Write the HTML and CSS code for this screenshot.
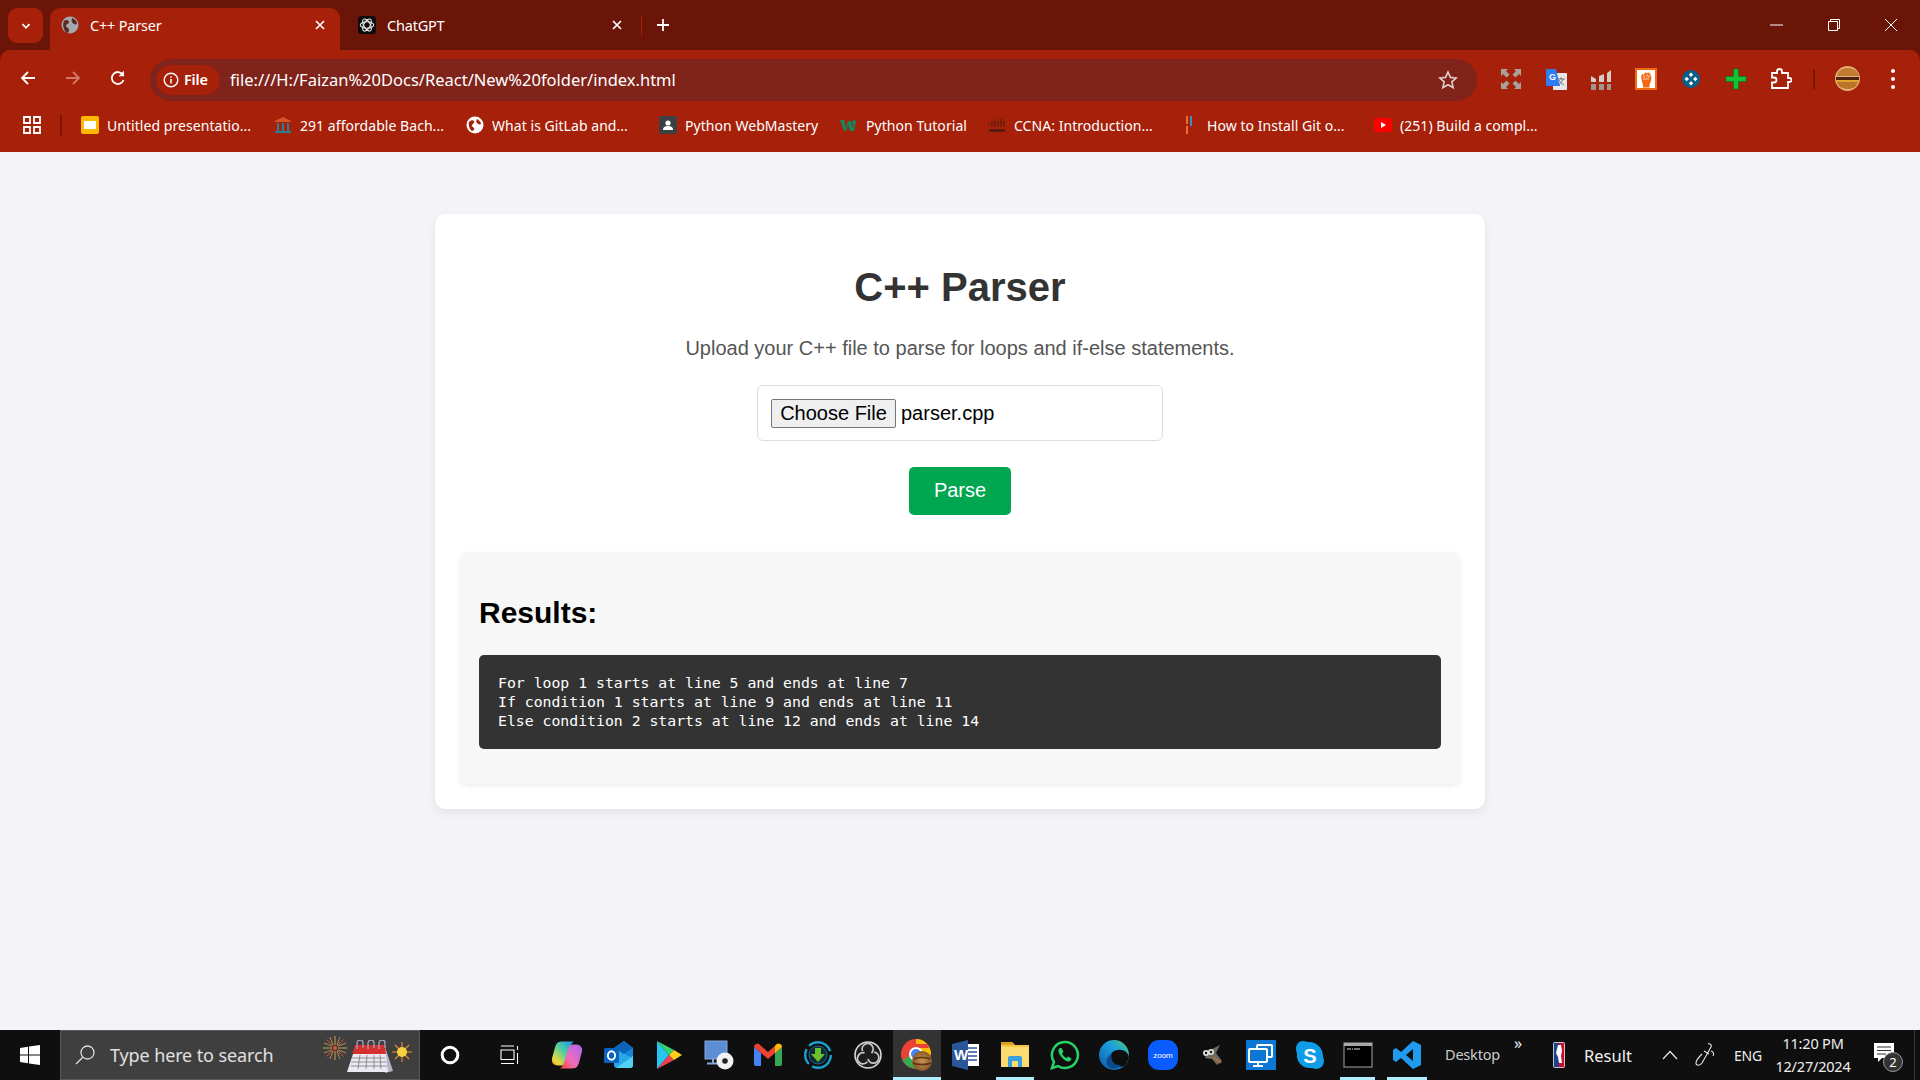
FILE: index.html
```html
<!DOCTYPE html>
<html lang="en">
<head>
<meta charset="utf-8">
<title>C++ Parser</title>
<link rel="stylesheet" href="styles.css">
</head>
<body>
<header class="browser">
  <div class="tabstrip">
    <div class="tab-menu"><svg class="i12" viewBox="0 0 12 12"><path d="M2.5 4.2 6 7.8l3.5-3.6" fill="none" stroke="#fff" stroke-width="1.8"/></svg></div>
    <div class="tab tab-active">
      <svg class="i18" viewBox="0 0 18 18"><circle cx="9" cy="9" r="8.5" fill="#a4a9ad"/><path d="M3 5c2-2 5-1 5 1s-3 2-3 4 3 1 3 4c0 1-1 3-2 3C3 15 1 9 3 5zM11 2c3 1 5 3 5 6-2 1-4 0-5-2-1-1 0-3 0-4z" fill="#5c2a22"/></svg>
      <span class="tab-title">C++ Parser</span>
      <svg class="i12 tab-close" viewBox="0 0 12 12"><path d="M2 2l8 8M10 2l-8 8" stroke="#fff" stroke-width="1.7"/></svg>
    </div>
    <div class="tab tab-other">
      <svg class="i18 gpt" viewBox="0 0 20 20"><rect width="20" height="20" rx="4" fill="#0c0c0c"/><g fill="none" stroke="#e8e8e8" stroke-width="1.2"><ellipse cx="10" cy="10" rx="7.5" ry="3.6"/><ellipse cx="10" cy="10" rx="7.5" ry="3.6" transform="rotate(60 10 10)"/><ellipse cx="10" cy="10" rx="7.5" ry="3.6" transform="rotate(120 10 10)"/></g></svg>
      <span class="tab-title">ChatGPT</span>
      <svg class="i12 tab-close" viewBox="0 0 12 12"><path d="M2 2l8 8M10 2l-8 8" stroke="#fff" stroke-width="1.7"/></svg>
    </div>
    <div class="tab-sep"></div>
    <div class="tab-new"><svg class="i14" viewBox="0 0 14 14"><path d="M7 1v12M1 7h12" stroke="#fff" stroke-width="1.8"/></svg></div>
    <div class="window-controls">
      <svg class="i14" viewBox="0 0 14 14"><path d="M0 7h13" stroke="#fff" stroke-width="1"/></svg>
      <svg class="i14" viewBox="0 0 14 14"><path d="M1.500 3.500h9v9h-9zM3.500 3.500v-2h9v9h-2" fill="none" stroke="#fff" stroke-width="1"/></svg>
      <svg class="i14" viewBox="0 0 14 14"><path d="M1 1l12 12M13 1L1 13" stroke="#fff" stroke-width="1"/></svg>
    </div>
  </div>
  <div class="toolbar">
    <div class="nav-btn"><svg class="i18" viewBox="0 0 18 18"><path d="M16 9H3M9 3 3 9l6 6" fill="none" stroke="#fff" stroke-width="1.8"/></svg></div>
    <div class="nav-btn"><svg class="i18" viewBox="0 0 18 18"><path d="M2 9h13M9 3l6 6-6 6" fill="none" stroke="#d27a68" stroke-width="1.8"/></svg></div>
    <div class="nav-btn"><svg class="i18" viewBox="0 0 18 18"><path d="M14.500 11a6 6 0 1 1-.6-5.200" fill="none" stroke="#fff" stroke-width="1.8"/><path d="M15 1.800v5.400H9.600z" fill="#fff"/></svg></div>
    <div class="omnibox">
      <div class="chip">
        <svg class="i16" viewBox="0 0 16 16"><circle cx="8" cy="8" r="6.800" fill="none" stroke="#fff" stroke-width="1.400"/><path d="M8 7v4.500M8 4.200v1.600" stroke="#fff" stroke-width="1.500"/></svg>
        <span class="chip-text">File</span>
      </div>
      <span class="url">file:///H:/Faizan%20Docs/React/New%20folder/index.html</span>
      <svg class="i18 star" viewBox="0 0 20 20"><path d="M10 2l2.400 5.400 5.800.6-4.400 3.900 1.300 5.800L10 14.700l-5.100 3 1.300-5.800L1.800 8l5.800-.6z" fill="none" stroke="#e3cfca" stroke-width="1.600"/></svg>
    </div>
    <div class="ext-row">
      <div class="ext"><svg class="i22" viewBox="0 0 22 22"><path d="M1 1h7L6 3l3.500 3.500-3 3L3 6 1 8zM21 1v7l-2-2-3.500 3.500-3-3L16 3l-2-2zM1 21v-7l2 2 3.500-3.500 3 3L6 19l2 2zM21 21h-7l2-2-3.500-3.500 3-3L19 16l2-2z" fill="#a8a09a"/></svg></div>
      <div class="ext"><svg class="i22" viewBox="0 0 22 22"><rect x="8" y="5" width="14" height="17" rx="1" fill="#e8e8e8"/><path d="M12 11h8M16 9v2M18 11c-1 3-3 5-5 6M14 12c1 2 3 4 5 5" stroke="#777" stroke-width="1" fill="none"/><path d="M1 1h10l4 17H2a1 1 0 0 1-1-1z" fill="#2f7cf2"/><text x="4" y="12" class="ext-g">G</text></svg></div>
      <div class="ext"><svg class="i22" viewBox="0 0 22 22"><path d="M1 8l5 3v3H1zM9 8l5-2v8H9zM17 5l4-3v12h-4z" fill="#d5cdc8"/><path d="M1 16h5v6H1zM9 16h5v6H9zM17 16h4v6h-4z" fill="#a0948e"/></svg></div>
      <div class="ext"><svg class="i22" viewBox="0 0 22 22"><rect x="1" y="1" width="20" height="20" fill="#fff" stroke="#f26a10" stroke-width="2"/><path d="M6 9l1-3 2 .5L10 4.500l2 .5 2-.5 1.500 2 1 3-1 5-1 2v3H8v-3l-1-3z" fill="#f26a10"/><path d="M9 7v3M12 6v3M14 7v3M8 11h6" stroke="#fff" stroke-width=".7"/></svg></div>
      <div class="ext"><svg class="i18" viewBox="0 0 18 18"><circle cx="9" cy="9" r="9" fill="#0a5f8a"/><path d="M9 2.500l2.200 2.200L9 7 6.800 4.700zM9 11l2.200 2.300L9 15.500l-2.200-2.200zM2.500 9l2.200-2.200L7 9l-2.300 2.200zM11 9l2.300-2.200L15.500 9l-2.200 2.200z" fill="#fff"/></svg></div>
      <div class="ext"><svg class="i22" viewBox="0 0 22 22"><path d="M8.500 1h5v7.500H21v5h-7.500V21h-5v-7.500H1v-5h7.500z" fill="#12c435" stroke="#0a7a20" stroke-width=".8"/></svg></div>
      <div class="ext"><svg class="i22" viewBox="0 0 22 22"><path d="M2 5h5V3.500a2.500 2.500 0 0 1 5 0V5h6v5h1.500a2 2 0 0 1 0 4H18v6H2v-5.500h2a2.500 2.500 0 0 0 0-5H2z" fill="none" stroke="#fff" stroke-width="1.800"/></svg></div>
      <div class="ext-sep"></div>
      <svg class="avatar" viewBox="0 0 25 25"><circle cx="12.500" cy="12.500" r="12.500" fill="#e2b27a"/><path d="M2 10C3 4 8 2 13 2s10 3 11 8z" fill="#c27a2c"/><path d="M1 11h23v3H1z" fill="#4e2410"/><path d="M1 14h23v2H1z" fill="#e3a52e"/><path d="M2 16h21c-1 5-5 7-10 7S3 21 2 16z" fill="#bd7428"/></svg>
      <div class="kebab"><i></i><i></i><i></i></div>
    </div>
  </div>
  <div class="bookmarks">
    <div class="bm-apps"><svg class="i18" viewBox="0 0 18 18"><path d="M1 1h6v6H1zM11 1h6v6h-6zM1 11h6v6H1zM11 11h6v6h-6z" fill="none" stroke="#fff" stroke-width="1.800"/></svg></div>
    <div class="bm-sep"></div>
    <div class="bm-list">
      <div class="bm"><svg class="i18" viewBox="0 0 18 18"><rect width="18" height="18" rx="2" fill="#fbb904"/><rect x="3" y="5" width="12" height="8" fill="#fff"/></svg><span>Untitled presentatio...</span></div>
      <div class="bm"><svg class="i18" viewBox="0 0 18 18"><path d="M1 5l8-4 8 4v1H1z" fill="#d8532a"/><path d="M3 7h2v8H3zM8 7h2v8H8zM13 7h2v8h-2z" fill="#2c7d95"/><path d="M1 15h16v2H1z" fill="#2c7d95"/></svg><span>291 affordable Bach...</span></div>
      <div class="bm"><svg class="i18" viewBox="0 0 18 18"><circle cx="9" cy="9" r="8.500" fill="#fff"/><path d="M3 6c2-2 4-2 5-1s-1 3-2 4 1 2 2 3-1 3-2 3C4 14 2 9 3 6zM11 3c2 1 4 3 4 5-2 1-3 0-4-1s-1-3 0-4z" fill="#a6200a"/></svg><span>What is GitLab and...</span></div>
      <div class="bm"><svg class="i18" viewBox="0 0 18 18"><rect width="18" height="18" rx="2" fill="#3c4043"/><circle cx="9" cy="7" r="2.600" fill="#fff"/><path d="M4 14c0-3 2-4 5-4s5 1 5 4z" fill="#fff"/></svg><span>Python WebMastery</span></div>
      <div class="bm"><svg class="i18" viewBox="0 0 18 18"><path d="M0 4h4l2 8 2-7h3l2 7 1-4h-2l1-4h2l1 2-2 9h-4l-2-6-2 6H4z" fill="#0f8a5f"/></svg><span>Python Tutorial</span></div>
      <div class="bm"><svg class="i18" viewBox="0 0 18 18"><path d="M1 7v2M4 5v6M7 3v8M10 5v6M13 3v8M16 5v6" stroke="#4a1a10" stroke-width="1.100"/><path d="M1 13h16v3H1z" fill="#4a1a10" opacity=".8"/></svg><span>CCNA: Introduction...</span></div>
      <div class="bm"><svg class="i18" viewBox="0 0 18 18"><path d="M6 0v8M6 10v8" stroke="#ee7b30" stroke-width="1.800"/><path d="M10 0v10" stroke="#29a0d8" stroke-width="1.800"/></svg><span>How to Install Git o...</span></div>
      <div class="bm"><svg class="i18" viewBox="0 0 18 18"><rect y="2" width="18" height="14" rx="3.500" fill="#f00"/><path d="M7 6l5 3-5 3z" fill="#fff"/></svg><span>(251) Build a compl...</span></div>
    </div>
  </div>
</header>

<main class="page">
  <section class="card">
    <h1 class="title">C++ Parser</h1>
    <p class="lead">Upload your C++ file to parse for loops and if-else statements.</p>
    <div class="file-box">
      <span class="file-btn">Choose File</span>
      <span class="file-name">parser.cpp</span>
    </div>
    <div class="parse-btn">Parse</div>
    <section class="results">
      <h2 class="results-title">Results:</h2>
      <pre class="output">For loop 1 starts at line 5 and ends at line 7
If condition 1 starts at line 9 and ends at line 11
Else condition 2 starts at line 12 and ends at line 14</pre>
    </section>
  </section>
</main>

<footer class="taskbar">
  <div class="start"><svg class="i20" viewBox="0 0 20 20"><path d="M0 3l8-1.200V9.500H0zM9 1.600 20 0v9.500H9zM0 10.500h8v7.700L0 17zM9 10.500h11V20L9 18.400z" fill="#fff"/></svg></div>
  <div class="search">
    <svg class="i22" viewBox="0 0 22 22"><circle cx="13.500" cy="8.500" r="6.500" fill="none" stroke="#ddd" stroke-width="1.300"/><path d="M8.800 13.200 2 20" stroke="#ddd" stroke-width="1.300"/></svg>
    <span class="search-text">Type here to search</span>
    <div class="search-art">
      <svg class="fw1" viewBox="0 0 24 24"><g stroke-width="1"><path d="M12 0v9M12 15v9M0 12h9M15 12h9" stroke="#c9a24a"/><path d="M3.500 3.500 9.500 9.500M14.500 14.500l6 6M20.500 3.500l-6 6M9.500 14.500l-6 6" stroke="#e0552a"/><path d="M7 1l3 8M14 15l3 8M17 1l-3 8M10 15l-3 8M1 7l8 3M15 14l8 3M23 7l-8 3M9 14l-8 3" stroke="#b08a5a"/></g><circle cx="12" cy="12" r="2" fill="#e0552a"/></svg>
      <svg class="cal" viewBox="0 0 47 33"><path d="M38 7l8 24-8 2z" fill="#b9b5c8"/><path d="M8 8h30l3 24H0z" fill="#ece9f2"/><path d="M8 5h30l1 9H5.500z" fill="#d62f2f"/><path d="M10 9V3a3 3 0 0 1 6 0v5M21 9V3a3 3 0 0 1 6 0v5M32 9V3a3 3 0 0 1 6 0v5" fill="none" stroke="#a8a4b8" stroke-width="1.300"/><path d="M5 18h33M4.300 22h35M3.700 26h36.500M13 15l-2 14M20 15l-1 14M27 15v14M33 15l1 14" stroke="#777" stroke-width=".8"/></svg>
      <svg class="fw2" viewBox="0 0 20 20"><path d="M10 0v20M0 10h20M3 3l14 14M17 3 3 17" stroke="#e8902a" stroke-width="1.100"/><circle cx="10" cy="10" r="5" fill="#f7d040"/></svg>
    </div>
  </div>
  <div class="tasks">
    <div class="task"><svg class="i20" viewBox="0 0 20 20"><circle cx="10" cy="10" r="7.800" fill="none" stroke="#fff" stroke-width="3"/></svg></div>
    <div class="task"><svg class="i22" viewBox="0 0 22 22"><path d="M2 2h13M2 19.500h13M2 6h13v9.500H2zM18.500 2v4M18.500 9v11" fill="none" stroke="#fff" stroke-width="1.100"/></svg></div>
    <div class="task"><svg class="i30" viewBox="0 0 30 27"><defs><linearGradient id="cp1" x1="1" y1="0" x2="0" y2="1"><stop offset="0" stop-color="#1e8ff0"/><stop offset=".45" stop-color="#4fd0a0"/><stop offset=".8" stop-color="#e8d83a"/><stop offset="1" stop-color="#f0a030"/></linearGradient><linearGradient id="cp2" x1="1" y1="0" x2="0" y2="1"><stop offset="0" stop-color="#a868f0"/><stop offset=".6" stop-color="#f06cb8"/><stop offset="1" stop-color="#f04a30"/></linearGradient></defs><path d="M10 0C5 0 4 3 3 6L0 17c-1 4 2 7 6 7h3c3 0 4-2 5-5l4-13c1-3 2-5 4-6z" fill="url(#cp1)"/><path d="M20 27c5 0 6-3 7-6l3-11c1-4-2-7-6-7h-3c-3 0-4 2-5 5l-4 13c-1 3-2 5-4 6z" fill="url(#cp2)"/></svg></div>
    <div class="task"><svg class="i30" viewBox="0 0 30 30"><path d="M10 8l10-7 9 7v17a3 3 0 0 1-3 3H13a3 3 0 0 1-3-3z" fill="#28a8e8"/><path d="M10 8l10-7 9 7-9 6z" fill="#0b64b8"/><path d="M20 14l9-6v10z" fill="#1488d8"/><path d="M12 28l17-12v9a3 3 0 0 1-3 3z" fill="#4fd0f4"/><rect x="0" y="8" width="15" height="15" rx="1.500" fill="#0a62c0"/><ellipse cx="7.500" cy="15.500" rx="3.600" ry="4.200" fill="none" stroke="#fff" stroke-width="2"/></svg></div>
    <div class="task"><svg class="play" viewBox="0 0 26 30"><path d="M1 1l12 14L1 29z" fill="#26c6f0"/><path d="M1 1l17 9-5 5z" fill="#35d66c"/><path d="M1 29l17-9-5-5z" fill="#f0424e"/><path d="M18 10l8 5-8 5-5-5z" fill="#fcce1e"/></svg></div>
    <div class="task"><svg class="i30" viewBox="0 0 30 30"><rect x="1" y="1" width="22" height="18" fill="#5b8ed6" stroke="#8aa9d8"/><path d="M9 19v4M3 23.500h12" stroke="#8aa9d8" stroke-width="2"/><circle cx="21" cy="21" r="8.500" fill="#f2f2f2"/><circle cx="21" cy="21" r="2.800" fill="#222"/></svg></div>
    <div class="task"><svg class="i30" viewBox="0 0 30 30"><path d="M1 7l7 6v13H3a2 2 0 0 1-2-2z" fill="#4285f4"/><path d="M29 7l-7 6v13h5a2 2 0 0 0 2-2z" fill="#34a853"/><path d="M1 7c0-3 3-4 5-3l9 8 9-8c2-1 5 0 5 3l-7 6-7 6-7-6z" fill="#ea4335"/><path d="M24 4c2-1 5 0 5 3l-7 6V6z" fill="#fbbc04"/></svg></div>
    <div class="task"><svg class="i30" viewBox="0 0 30 30"><circle cx="15" cy="15" r="12.800" fill="none" stroke="#1b9ed0" stroke-width="2.400" stroke-dasharray="26 4 16 4"/><circle cx="15" cy="15" r="9" fill="#0d2a36" stroke="#15708f"/><path d="M12 8h6v6h4l-7 8-7-8h4z" fill="#6bc22e"/></svg></div>
    <div class="task"><svg class="i30" viewBox="0 0 30 30"><circle cx="15" cy="15" r="13" fill="#1d1d1d" stroke="#d8d8d8" stroke-width="1.600"/><g fill="none" stroke="#c8c8c8" stroke-width="1.800"><path d="M9.500 11a5.500 5.500 0 1 1 9 2"/><path d="M9.500 11a5.500 5.500 0 1 1 9 2" transform="rotate(120 15 15)"/><path d="M9.500 11a5.500 5.500 0 1 1 9 2" transform="rotate(240 15 15)"/></g></svg></div>
    <div class="task task-hi"><svg class="i32" viewBox="0 0 32 32"><defs><radialGradient id="bn"><stop offset="0" stop-color="#c99255"/><stop offset="1" stop-color="#8a5a2a"/></radialGradient></defs><circle cx="15" cy="15" r="15" fill="#ea4335"/><path d="M1.500 21a15 15 0 0 0 18 8l-5-15z" fill="#34a853"/><path d="M15 0a15 15 0 0 1 15 15l-7 8-8-8V0z" fill="#fbbc04"/><path d="M15 9h13a15 15 0 0 0-2-4H15z" fill="#ea4335"/><circle cx="15" cy="15" r="6" fill="#4285f4" stroke="#fff" stroke-width="2"/><circle cx="21" cy="22" r="10" fill="url(#bn)"/><path d="M13 20c4-2 12-2 16 0M12 24c4 2 14 2 18 0" fill="none" stroke="#5b3414" stroke-width="1.600"/></svg></div>
    <div class="task"><svg class="word" viewBox="0 0 27 30"><rect x="11" y="4" width="16" height="22" fill="#fff"/><path d="M16 8h9M16 12h9M16 16h9M16 20h9" stroke="#2b579a" stroke-width="1.600"/><path d="M0 4 16 0v30L0 26z" fill="#2b579a"/><text x="2" y="20" class="word-w">W</text></svg></div>
    <div class="task task-on"><svg class="i30" viewBox="0 0 30 30"><path d="M1 2h11l3 3h14v22H1z" fill="#f5c84c"/><path d="M1 2h11l3 3H1z" fill="#e0a020"/><path d="M1 7h28v20H1z" fill="#fbdc70"/><path d="M8 27v-9a2 2 0 0 1 2-2h10a2 2 0 0 1 2 2v9h-4v-6h-6v6z" fill="#3a9fe0"/></svg></div>
    <div class="task"><svg class="i30" viewBox="0 0 30 30"><path d="M15 2a13 13 0 0 0-11 20L2 28l6-2A13 13 0 1 0 15 2z" fill="none" stroke="#25d366" stroke-width="2.500"/><path d="M10 8c-2 1-2 4 0 7s5 6 8 6.500c2 .3 3-1 3.500-3l-3.500-2-1.500 1.500c-2-1-3.500-2.500-4.500-4.500l1.500-1.500L11.500 8z" fill="#25d366"/></svg></div>
    <div class="task"><svg class="i30" viewBox="0 0 30 30"><defs><linearGradient id="ed" x1="0" y1="1" x2="1" y2="0"><stop offset="0" stop-color="#0c59a4"/><stop offset=".6" stop-color="#1b9de2"/><stop offset="1" stop-color="#4ed06e"/></linearGradient></defs><circle cx="15" cy="15" r="15" fill="url(#ed)"/><path d="M30 17c-1-5-6-8-11-7-5 0-8 4-8 8s4 9 10 9c4 0 7-3 9-10z" fill="#0f0f0f"/><path d="M13 14c-2 5 1 12 9 11-2 3-7 5-11 3-6-3-4-12 2-14z" fill="#0d4a8a"/></svg></div>
    <div class="task"><svg class="i30" viewBox="0 0 30 30"><rect width="30" height="30" rx="11" fill="#0b5cff"/><text x="15" y="18" class="zoom-t">zoom</text></svg></div>
    <div class="task"><svg class="i24" viewBox="0 0 24 24"><path d="M8 8l12-6-4 8 6 8-5 4-5-6-7-1z" fill="#6f6a5e"/><circle cx="6" cy="10" r="3" fill="#ddd"/><circle cx="11" cy="9" r="3" fill="#ddd"/><circle cx="6" cy="10" r="1.200" fill="#111"/><circle cx="11" cy="9" r="1.200" fill="#111"/><path d="M13 14l8 6" stroke="#b5753a" stroke-width="1.500"/></svg></div>
    <div class="task"><svg class="i30" viewBox="0 0 30 30"><rect width="30" height="30" fill="#0c78d4"/><rect x="11" y="5" width="15" height="12" rx="1" fill="none" stroke="#fff" stroke-width="2"/><rect x="3" y="9" width="18" height="13" rx="1" fill="#0c78d4" stroke="#fff" stroke-width="2"/><path d="M12 22v3M7 26h10" stroke="#fff" stroke-width="2"/></svg></div>
    <div class="task"><svg class="i30" viewBox="0 0 30 30"><path d="M8 1c2 0 4 1 5 1 8-1 15 6 15 14 0 1 1 3 1 5 0 5-4 8-8 8-2 0-3-1-5-1C8 29 1 22 2 14c0-1-1-3-1-5 0-5 3-8 7-8z" fill="#0f9ce6"/><text x="15" y="23" class="skype-s">S</text></svg></div>
    <div class="task task-on"><svg class="i30" viewBox="0 0 30 30"><rect x="1" y="3" width="28" height="24" fill="#000" stroke="#8c8c8c" stroke-width="1.200"/><rect x="1" y="3" width="28" height="3" fill="#a8a8a8"/><path d="M4 9h4M9 9h1M11 9h6" stroke="#ddd" stroke-width="1"/></svg></div>
    <div class="task task-on"><svg class="i30" viewBox="0 0 30 30"><path d="M21 1l8 4v20l-8 4-12-11-5 4-3-2V10l3-2 5 4zm0 8-7 6 7 6z" fill="#1f9cf0"/></svg></div>
  </div>
  <div class="tray">
    <span class="tray-desktop">Desktop</span>
    <span class="tray-more">»</span>
    <svg class="nba" viewBox="0 0 12 26"><rect width="12" height="26" rx="2" fill="#e8e8e8"/><rect x=".8" y=".8" width="5.200" height="24.400" fill="#1d428a"/><rect x="6" y=".8" width="5.200" height="24.400" fill="#c8102e"/><path d="M5 3h3l1 6-1 5 1 7H6l-1-6-2-4z" fill="#fff"/></svg>
    <span class="tray-result">Result</span>
    <svg class="tray-chev" viewBox="0 0 16 10"><path d="M1 9l7-7.500L15 9" fill="none" stroke="#e8e8e8" stroke-width="1.200"/></svg>
    <svg class="tray-pen" viewBox="0 0 20 24"><path d="M13 1c2-1 4 1 3 3L7 20c-2 3-6 3-6 0 0-2 3-6 6-9M16 8c3 1 3 3 2 5M9 8l5 3" fill="none" stroke="#e8e8e8" stroke-width="1.100"/></svg>
    <span class="tray-lang">ENG</span>
    <div class="clock"><span>11:20 PM</span><span>12/27/2024</span></div>
    <div class="notif">
      <svg class="notif-ic" viewBox="0 0 20 20"><path d="M0 0h20v15H8l-4 4v-4H0z" fill="#fff"/><path d="M3 4h14M3 7.500h14M3 11h9" stroke="#333" stroke-width="1.200"/></svg>
      <span class="notif-badge">2</span>
    </div>
  </div>
</footer>
</body>
</html>
```

FILE: styles.css
```css
* { box-sizing: border-box; }
html, body { margin: 0; height: 100%; }
body {
  height: 1080px;
  overflow: hidden;
  display: flex;
  flex-direction: column;
  background: #f3f3f8;
  font-family: "Liberation Sans", Arial, sans-serif;
}
svg { display: block; flex: none; }
.i12 { width: 12px; height: 12px; }
.i14 { width: 14px; height: 14px; }
.i16 { width: 16px; height: 16px; }
.i18 { width: 18px; height: 18px; }
.i20 { width: 20px; height: 20px; }
.i22 { width: 22px; height: 22px; }
.i24 { width: 24px; height: 24px; }
.i30 { width: 30px; height: 30px; }
.i32 { width: 32px; height: 32px; }
.play { width: 26px; height: 30px; }
.word { width: 27px; height: 30px; }

/* browser chrome */
.browser { flex: none; background: #6b1408; font-family: "Noto Sans", sans-serif; color: #fff; }
.tabstrip { height: 50px; display: flex; align-items: flex-start; padding: 8px 0 0 8px; }
.tab-menu { width: 35px; height: 35px; border-radius: 9px; background: #a6200a; display: flex; align-items: center; justify-content: center; margin-right: 7px; }
.tab { height: 42px; display: flex; align-items: center; font-size: 14.5px; letter-spacing: -.2px; }
.tab-active { width: 290px; background: #a6200a; border-radius: 10px 10px 0 0; padding: 0 14px 8px 11px; }
.tab-other { width: 301px; padding: 0 18px 8px 18px; }
.gpt { width: 18px; height: 20px; }
.tab-title { flex: 1; margin-left: 11px; }
.tab-sep { width: 1px; height: 20px; background: #a6200a; margin-top: 8px; }
.tab-new { margin: 10px 0 0 14px; }
.window-controls { margin-left: auto; width: 150px; padding: 10px 22px 0 0; display: flex; justify-content: space-between; }
.toolbar { height: 54px; background: #a6200a; border-radius: 10px 10px 0 0; display: flex; align-items: flex-start; padding: 9px 0 0 5px; }
.nav-btn { width: 45px; height: 38px; display: flex; align-items: center; justify-content: center; }
.omnibox { width: 1327px; height: 42px; margin-left: 10px; background: #80231a; border-radius: 21px; display: flex; align-items: center; padding: 0 19px 0 6px; }
.chip { width: 64px; height: 30px; border-radius: 15px; background: #a6200a; display: flex; align-items: center; padding-left: 7px; gap: 5px; }
.chip-text { font-size: 14.5px; font-weight: 600; letter-spacing: -.2px; margin-bottom: 2px; }
.url { flex: 1; margin: 0 0 2px 10px; font-size: 16.5px; letter-spacing: 0; white-space: nowrap; color: #fff; }
.star { width: 20px; height: 20px; }
.ext-row { display: flex; align-items: center; margin-left: 11px; height: 39px; }
.ext { width: 45px; display: flex; justify-content: center; }
.ext-sep { width: 2px; height: 20px; background: #7a1606; margin: 0 20px 0 10px; }
.avatar { width: 25px; height: 25px; margin-right: 31px; }
.kebab { display: flex; flex-direction: column; gap: 4px; width: 4px; }
.kebab i { width: 4px; height: 4px; border-radius: 50%; background: #fff; }
.ext-g { font: 700 9px "Liberation Sans", sans-serif; fill: #fff; }
.bookmarks { height: 48px; background: #a6200a; display: flex; align-items: flex-start; padding: 0 0 0 23px; }
.bm-apps { height: 42px; display: flex; align-items: center; }
.bm-sep { width: 2px; height: 21px; background: #7a1606; margin: 11px 19px 0 19px; }
.bm-list { display: grid; grid-template-columns: 193px 192px 193px 181px 148px 193px 193px auto; height: 42px; }
.bm { display: flex; align-items: center; gap: 8px; font-size: 14px; letter-spacing: .05px; white-space: nowrap; }

/* page */
.page { flex: 1; min-height: 0; padding-top: 62px; display: flex; justify-content: center; align-items: flex-start; }
.card { width: 1050px; background: #fff; border-radius: 10px; padding: 25px; box-shadow: 0 4px 10px rgba(0,0,0,.07); display: flex; flex-direction: column; align-items: center; }
.title { margin: 25px 0 27px; font-size: 40px; line-height: 46px; font-weight: 700; color: #333; }
.lead { margin: 0 0 25px; font-size: 20px; line-height: 23px; color: #555; }
.file-box { width: 406px; height: 56px; border: 1px solid #ddd; border-radius: 6px; display: flex; align-items: center; padding-left: 13px; font-size: 20px; color: #000; }
.file-btn { width: 125px; height: 29px; border: 1px solid #767676; border-radius: 2px; background: #efefef; display: flex; align-items: center; justify-content: center; }
.file-name { margin-left: 5px; }
.parse-btn { margin-top: 26px; width: 102px; height: 48px; padding-bottom: 2px; border-radius: 5px; background: #00a650; color: #fff; font-size: 20px; display: flex; align-items: center; justify-content: center; }
.results { align-self: stretch; margin-top: 37px; height: 232px; background: #f7f7f7; border-radius: 8px; padding: 44px 19px 0; box-shadow: 0 2px 5px rgba(0,0,0,.08); }
.results-title { margin: 0 0 25px; font-size: 30px; line-height: 34px; font-weight: 700; color: #000; }
.output { margin: 0; background: #333; color: #fff; border-radius: 5px; padding: 18px 19px 19px; font: 14.8px/19px "DejaVu Sans Mono", monospace; }

/* taskbar */
.taskbar { flex: none; height: 50px; background: #0f0f0f; display: flex; color: #eee; font-family: "Noto Sans", sans-serif; }
.start { width: 60px; display: flex; align-items: center; justify-content: center; }
.search { width: 360px; background: #3f3f3f; border: 1px solid #5a5a5a; display: flex; align-items: center; padding-left: 13px; }
.search-text { margin-left: 14px; font-size: 18px; letter-spacing: -.12px; color: #e0e0e0; white-space: nowrap; }
.search-art { margin-left: auto; display: flex; align-items: flex-start; padding-right: 7px; height: 100%; }
.fw1 { width: 24px; height: 24px; margin-top: 5px; }
.cal { width: 47px; height: 33px; margin-top: 9px; }
.fw2 { width: 20px; height: 20px; margin-top: 11px; margin-left: -2px; }
.tasks { display: grid; grid-template-columns: 60px 60px 54px 50px 50px 49px 50px 50px 50px 48px 49px 50px 49px 49px 49px 49px 49px 49px 47px 52px; }
.task { position: relative; display: flex; align-items: center; justify-content: center; }
.task-hi { background: #333; }
.task-hi::after, .task-on::after { content: ""; position: absolute; bottom: 0; left: 6px; right: 6px; height: 3px; background: #aeeeff; }
.task-hi::after { left: 0; right: 0; }
.word-w { font: 700 15px "Liberation Sans", sans-serif; fill: #fff; }
.zoom-t { font: 400 8px "Liberation Sans", sans-serif; fill: #fff; text-anchor: middle; }
.skype-s { font: 700 20px "Liberation Sans", sans-serif; fill: #fff; text-anchor: middle; }
.tray { flex: 1; display: flex; align-items: center; padding-left: 12px; font-size: 14px; border-right: 1px solid #3a3a3a; margin-right: 5px; }
.tray-desktop { width: 69px; font-size: 14.5px; letter-spacing: -.2px; color: #ccc; margin-top: -2px; }
.tray-more { width: 30px; font-size: 16px; margin-top: -24px; }
.nba { width: 12px; height: 26px; margin-left: 9px; }
.tray-result { margin-left: 19px; font-size: 16.5px; color: #eee; width: 58px; }
.tray-chev { width: 16px; height: 10px; margin-left: 20px; }
.tray-pen { width: 20px; height: 24px; margin-left: 17px; }
.tray-lang { margin-left: 19px; width: 30px; font-size: 14px; letter-spacing: -.2px; }
.clock { width: 84px; margin-left: 7px; display: flex; flex-direction: column; align-items: center; font-size: 14.5px; letter-spacing: -.2px; line-height: 23px; }
.notif { position: relative; margin-left: 19px; width: 24px; height: 26px; margin-top: 2px; }
.notif-ic { width: 20px; height: 20px; }
.notif-badge { position: absolute; left: 9px; top: 9px; width: 20px; height: 20px; border-radius: 50%; background: #333; border: 1px solid #999; font-size: 13px; line-height: 18px; text-align: center; color: #fff; }
```
